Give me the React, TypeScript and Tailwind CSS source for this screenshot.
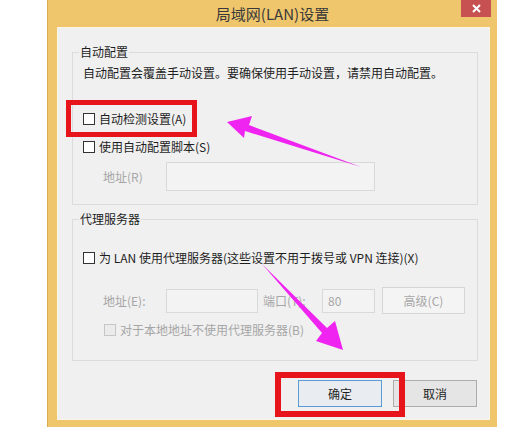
function Check({ label, disabled }: { label: string; disabled?: boolean }) {
  return (
    <div className="flex items-center h-4">
      <span
        className={`w-[12px] h-[12px] border ${
          disabled ? "border-[#c6c6c6] bg-[#ebebeb]" : "border-[#333333] bg-white"
        }`}
      />
      <span className={`ml-[4px] whitespace-nowrap ${disabled ? "text-[#a6a6a6]" : "text-[#1e1e1e]"}`}>
        {label}
      </span>
    </div>
  );
}

export default function App() {
  return (
    <div className="relative w-[529px] h-[430px] bg-white overflow-hidden font-['Noto_Sans_CJK_SC','Noto_Sans',sans-serif] text-[12px] leading-4">
      {/* window */}
      <div className="ml-[47px] w-[450px] h-[427px] bg-[#efc66c] border-l border-[#d9ad4f] flex flex-col">
        <div className="relative h-[27px] flex items-center justify-center">
          <span className="text-[15px] text-[#3a3a3a] leading-[27px]">局域网(LAN)设置</span>
          <div className="absolute top-0 right-[6px] w-[30px] h-[17px] bg-[#c75050] flex items-center justify-center">
            <svg width="9" height="9" viewBox="0 0 9 9">
              <path d="M1 1 L8 8 M8 1 L1 8" stroke="#ffffff" strokeWidth="2" />
            </svg>
          </div>
        </div>

        <div className="ml-[9px] mr-[7px] mb-[7px] flex-1 bg-[#f0f0f0] border border-[#fbf5e6] flex flex-col">
          {/* 自动配置 */}
          <fieldset className="ml-[14px] mt-[16px] w-[406px] border border-[#dcdcdc] pb-[13px]">
            <legend className="ml-[6px] px-[1px] text-[#1e1e1e]">自动配置</legend>
            <div className="pl-[10px]">
              <p className="mt-[5px] text-[#1e1e1e] whitespace-nowrap">
                自动配置会覆盖手动设置。要确保使用手动设置，请禁用自动配置。
              </p>
              <div className="mt-[30px]">
                <Check label="自动检测设置(A)" />
              </div>
              <div className="mt-[12px]">
                <Check label="使用自动配置脚本(S)" />
              </div>
              <div className="mt-[7px] flex items-center">
                <span className="ml-[20px] w-[63px] text-[#a6a6a6]">地址(R)</span>
                <div className="w-[209px] h-[29px] bg-[#f3f3f3] border border-[#d9d9d9]" />
              </div>
            </div>
          </fieldset>

          {/* 代理服务器 */}
          <fieldset className="ml-[14px] mt-[6px] w-[406px] border border-[#dcdcdc] pb-[22px]">
            <legend className="ml-[6px] px-[1px] text-[#1e1e1e]">代理服务器</legend>
            <div className="pl-[10px]">
              <div className="mt-[23px]">
                <Check label="为 LAN 使用代理服务器(这些设置不用于拨号或 VPN 连接)(X)" />
              </div>
              <div className="mt-[21px] h-[27px] flex items-center">
                <span className="ml-[20px] w-[63px] text-[#a6a6a6]">地址(E):</span>
                <div className="w-[92px] h-[24px] bg-[#f3f3f3] border border-[#d9d9d9]" />
                <span className="ml-[5px] w-[59px] text-[#a6a6a6]">端口(T):</span>
                <div className="w-[53px] h-[24px] bg-[#f3f3f3] border border-[#d9d9d9] pl-[5px] flex items-center text-[#a6a6a6]">
                  80
                </div>
                <div className="ml-[7px] w-[83px] h-[27px] bg-[#f4f4f4] border border-[#d5d5d5] flex items-center justify-center text-[#a6a6a6]">
                  高级(C)
                </div>
              </div>
              <div className="mt-[8px] ml-[21px]">
                <Check label="对于本地地址不使用代理服务器(B)" disabled />
              </div>
            </div>
          </fieldset>

          <div className="mt-[19px] mr-[12px] flex justify-end gap-[11px]">
            <div className="w-[84px] h-[27px] bg-[#e9edf1] border border-[#5b9bd5] flex items-center justify-center text-[#1e1e1e]">
              确定
            </div>
            <div className="w-[84px] h-[27px] bg-[#e5e5e5] border border-[#acacac] flex items-center justify-center text-[#1e1e1e]">
              取消
            </div>
          </div>
        </div>
      </div>

      {/* annotations */}
      <div className="absolute left-[66px] top-[100px] w-[131px] h-[37px] border-[5px] border-[#e8141c]" />
      <div className="absolute left-[275px] top-[372px] w-[130px] h-[45px] border-[6px] border-[#e8141c]" />
      <svg className="absolute left-0 top-0" width="529" height="430" viewBox="0 0 529 430">
        <polygon points="227,122 252,116 249,125 361,167 245,131 244,138" fill="#f024f0" />
        <polygon points="343,350 316,341 322,333 262,264 327,328 335,321" fill="#f024f0" />
      </svg>
    </div>
  );
}
